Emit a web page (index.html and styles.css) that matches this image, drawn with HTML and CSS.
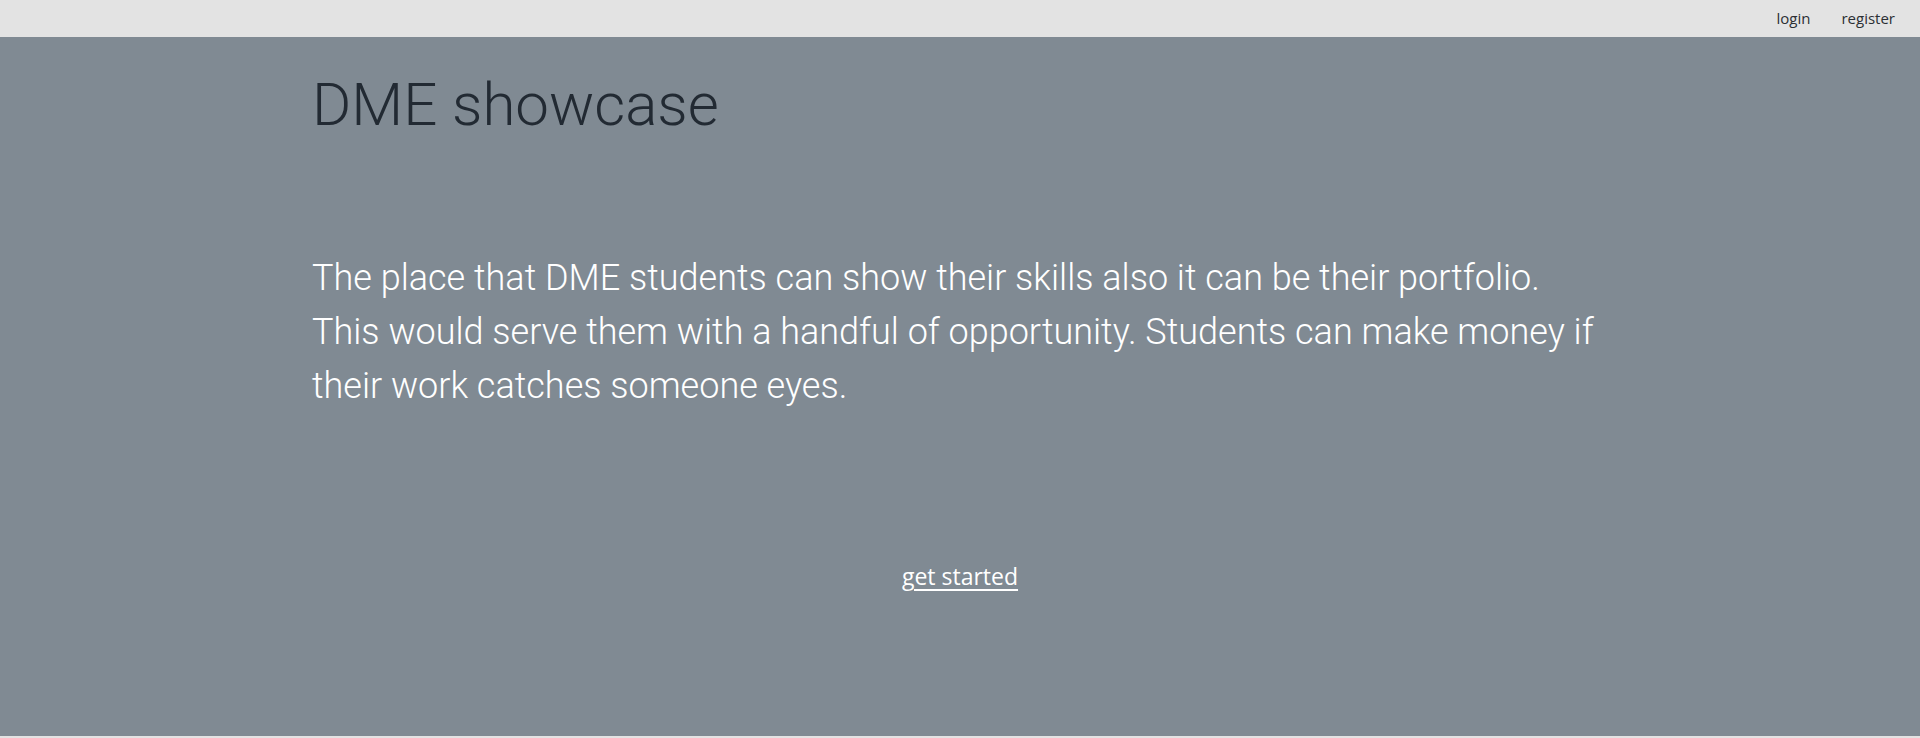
FILE: index.html
```html
<!DOCTYPE html>
<html lang="en">
<head>
<meta charset="utf-8">
<title>DME showcase</title>
<link rel="stylesheet" href="styles.css">
</head>
<body>
<header class="topbar">
  <nav class="nav">
    <a class="nav-link" href="#">login</a>
    <a class="nav-link" href="#">register</a>
  </nav>
</header>
<main class="hero">
  <div class="container">
    <h1 class="title">DME showcase</h1>
    <p class="lead">The place that DME students can show their skills also it can be their portfolio. This would serve them with a handful of opportunity. Students can make money if their work catches someone eyes.</p>
    <div class="cta-row">
      <a class="cta" href="#">get started</a>
    </div>
  </div>
</main>
</body>
</html>
```
FILE: styles.css
```css
html, body {
  margin: 0;
  padding: 0;
}
body {
  background: #e3e3e3;
  font-family: "Open Sans", "Liberation Sans", sans-serif;
  color: #212529;
}
.topbar {
  height: 37px;
  background: #e3e3e3;
  display: flex;
  justify-content: flex-end;
  align-items: center;
}
.nav {
  display: flex;
  gap: 31px;
  padding-right: 25px;
  padding-bottom: 1px;
}
.nav-link {
  font-size: 15px;
  color: #2b2f33;
  text-decoration: none;
}
.hero {
  background: #808a93;
  height: 699px;
}
.container {
  width: 1296px;
  margin: 0 auto;
  padding-top: 32px;
}
.title {
  margin: 0;
  font-family: Roboto, "Liberation Sans", sans-serif;
  font-weight: 300;
  font-size: 60px;
  line-height: 72px;
  color: #222a33;
}
.lead {
  margin: 110px 0 0 0;
  font-family: Roboto, "Liberation Sans", sans-serif;
  font-weight: 300;
  font-size: 36px;
  line-height: 54px;
  color: #ffffff;
}
.cta-row {
  display: flex;
  justify-content: center;
  margin-top: 146px;
}
.cta {
  font-size: 23px;
  line-height: 34px;
  color: #ffffff;
  text-decoration: underline;
  text-underline-offset: 4px;
  text-decoration-thickness: 2px;
}
```
